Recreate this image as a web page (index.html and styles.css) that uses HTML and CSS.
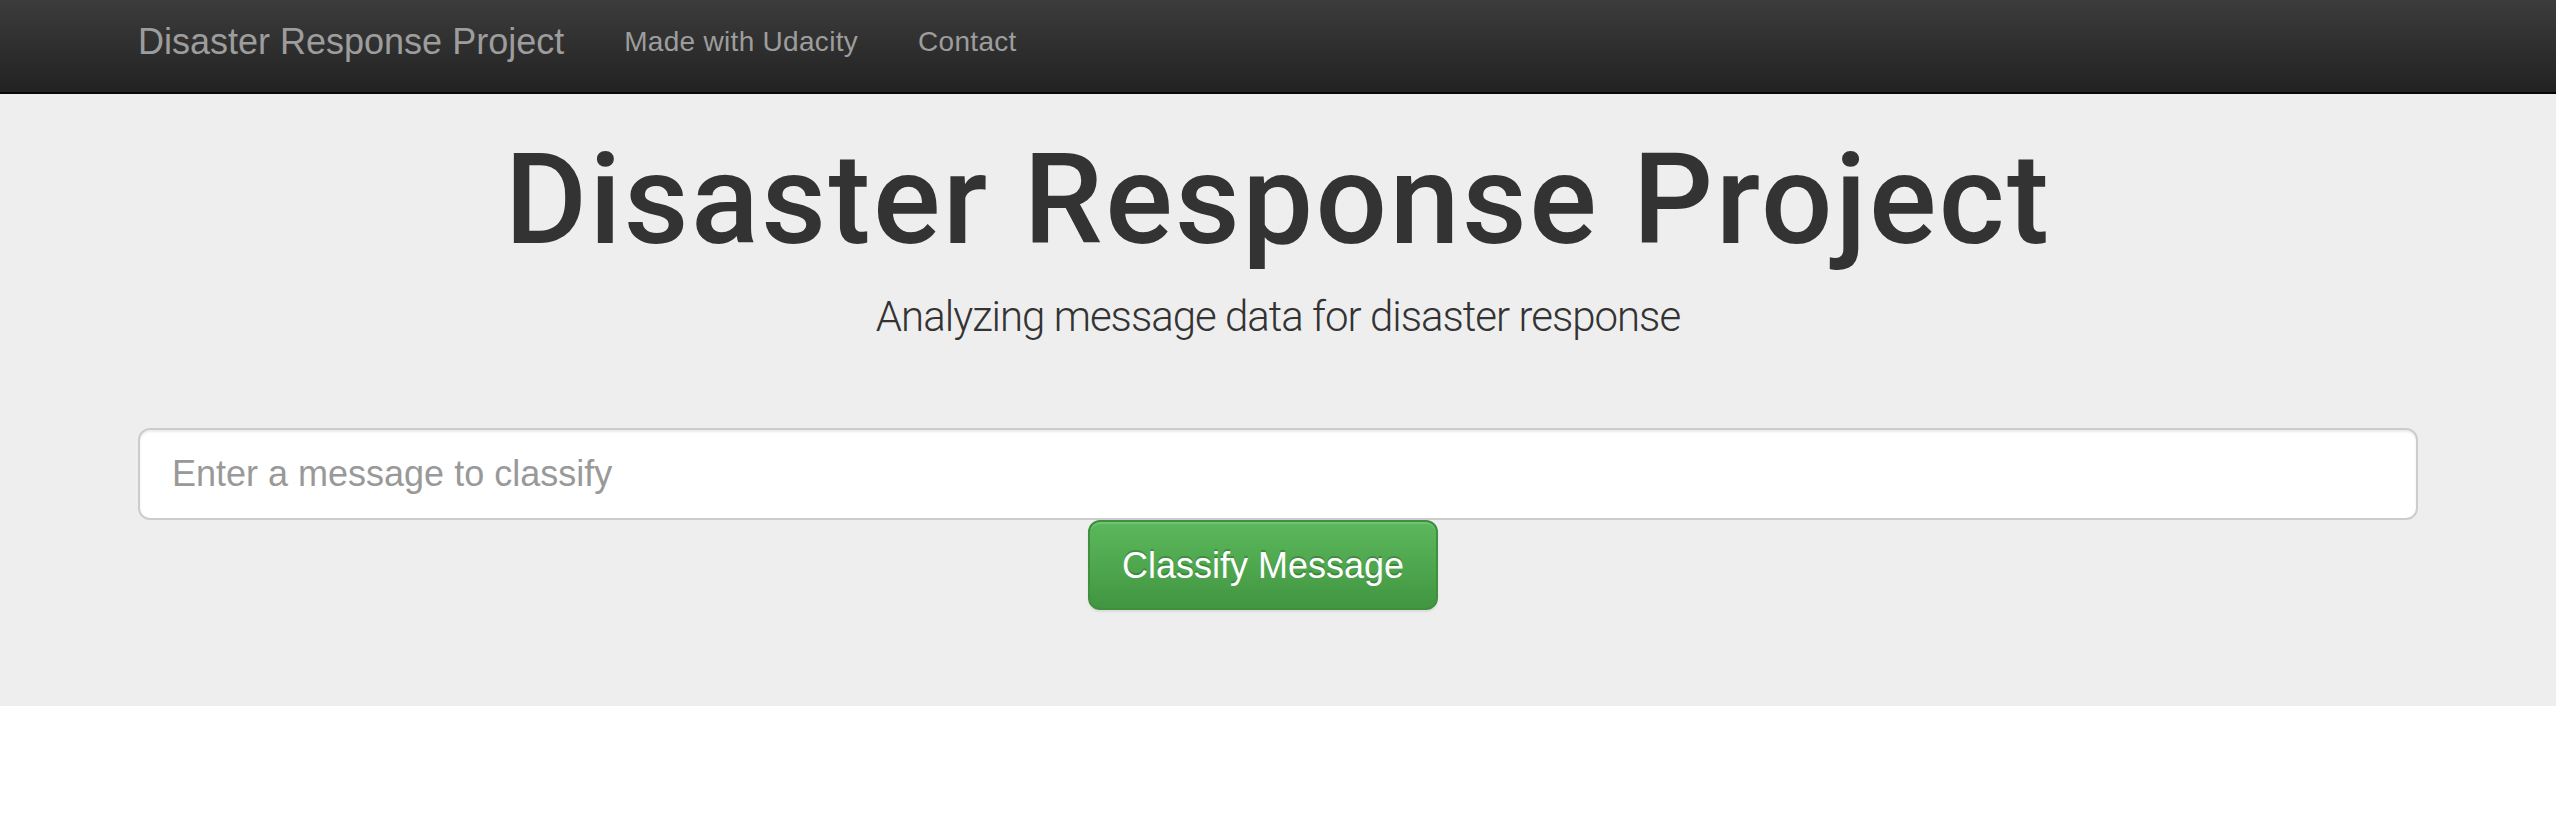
FILE: index.html
```html
<!DOCTYPE html>
<html lang="en">
<head>
<meta charset="utf-8">
<title>Disaster Response Project</title>
<link rel="stylesheet" href="styles.css">
</head>
<body>
<nav class="navbar">
  <div class="container nav-inner">
    <a class="brand" href="#">Disaster Response Project</a>
    <ul class="nav-links">
      <li><a href="#">Made with Udacity</a></li>
      <li><a href="#">Contact</a></li>
    </ul>
  </div>
</nav>
<section class="jumbotron">
  <div class="container">
    <h1 class="title">Disaster Response Project</h1>
    <p class="lead">Analyzing message data for disaster response</p>
    <form class="classify-form">
      <input class="message-input" type="text" name="query" placeholder="Enter a message to classify">
      <div class="button-row">
        <button type="button" class="btn-success">Classify Message</button>
      </div>
    </form>
  </div>
</section>
</body>
</html>
```
FILE: styles.css
```css
* { box-sizing: border-box; }
html, body { margin: 0; padding: 0; background: #fff; }
body {
  font-family: "Liberation Sans", Arial, sans-serif;
  color: #333;
}
.container {
  width: 2280px;
  margin: 0 auto;
}
.navbar {
  height: 94px;
  background: linear-gradient(to bottom, #3c3c3c 0%, #222 100%);
  border-bottom: 2px solid #080808;
}
.nav-inner {
  display: flex;
  align-items: flex-start;
  padding-top: 22px;
}
.brand {
  font-size: 36px;
  line-height: 40px;
  color: #9d9d9d;
  text-decoration: none;
  margin-right: 60px;
}
.nav-links {
  list-style: none;
  margin: 0;
  padding: 0;
  display: flex;
  gap: 60px;
}
.nav-links a {
  font-size: 28px;
  line-height: 40px;
  color: #9d9d9d;
  text-decoration: none;
  display: block;
  letter-spacing: 0.3px;
}
.jumbotron {
  background: #eee;
  padding: 37px 0 96px;
}
.title {
  margin: 0;
  text-align: center;
  font-family: Roboto, "Liberation Sans", sans-serif;
  font-size: 126px;
  line-height: 139px;
  font-weight: 500;
  color: #333;
  letter-spacing: 2.4px;
}
.lead {
  margin: 17px 0 0;
  text-align: center;
  font-family: Roboto, "Liberation Sans", sans-serif;
  font-weight: 300;
  font-size: 42px;
  line-height: 60px;
  color: #333;
  letter-spacing: -1px;
}
.classify-form {
  margin-top: 81px;
}
.message-input {
  display: block;
  width: 100%;
  height: 92px;
  padding: 20px 32px;
  font-family: "Liberation Sans", Arial, sans-serif;
  font-size: 36px;
  line-height: 48px;
  color: #555;
  background: #fff;
  border: 2px solid #ccc;
  border-radius: 12px;
  box-shadow: inset 0 2px 2px rgba(0,0,0,.075);
  outline: none;
}
.message-input::placeholder { color: #999; }
.button-row {
  display: flex;
  justify-content: center;
  padding-right: 30px;
}
.btn-success {
  font-family: "Liberation Sans", Arial, sans-serif;
  font-size: 36px;
  line-height: 48px;
  padding: 20px 32px;
  height: 90px;
  color: #fff;
  background: linear-gradient(to bottom, #5cb85c 0%, #419641 100%);
  border: 2px solid #3e8f3e;
  border-radius: 12px;
  text-shadow: 0 -2px 0 rgba(0,0,0,.2);
  box-shadow: inset 0 2px 0 rgba(255,255,255,.15), 0 2px 2px rgba(0,0,0,.075);
  cursor: pointer;
}
```
